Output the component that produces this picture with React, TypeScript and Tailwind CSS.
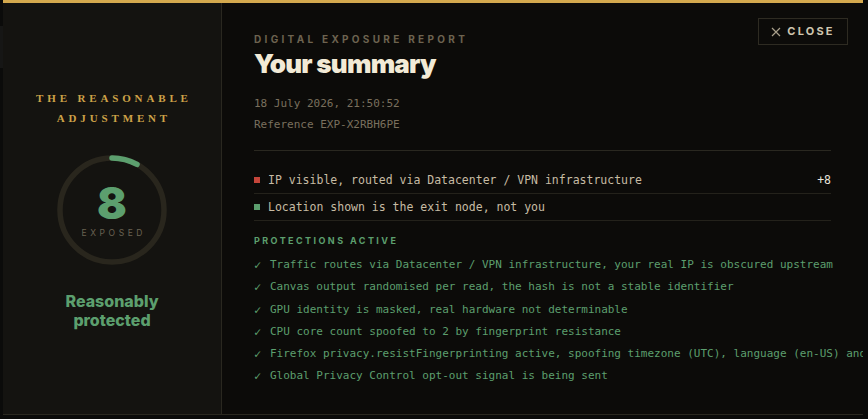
import React from "react";

const checks = [
  "Traffic routes via Datacenter / VPN infrastructure, your real IP is obscured upstream",
  "Canvas output randomised per read, the hash is not a stable identifier",
  "GPU identity is masked, real hardware not determinable",
  "CPU core count spoofed to 2 by fingerprint resistance",
  "Firefox privacy.resistFingerprinting active, spoofing timezone (UTC), language (en-US) and",
  "Global Privacy Control opt-out signal is being sent",
];

const mono = { fontFamily: '"DejaVu Sans Mono", "Liberation Mono", monospace' } as const;
const sans = { fontFamily: 'Inter, "Noto Sans", sans-serif' } as const;

export default function App() {
  return (
    <div className="relative w-[868px] h-[419px] overflow-hidden bg-[#0b0b0a]">
      <div className="absolute left-0 top-[26px] w-[3px] h-[42px] bg-[#161615]" />
      <div className="relative ml-[3px] flex w-[860px] h-[415px] overflow-hidden border-t-[3px] border-t-[#d4a94e] border-b border-b-[#2a2820] bg-[#0c0b09]">
        {/* Left panel */}
        <div className="flex w-[219px] shrink-0 flex-col items-center justify-center border-r border-r-[#2a2820] bg-[#141310]">
          <div
            className="text-center text-[11px] font-bold leading-[20px] tracking-[0.35em] text-[#cda248] pl-[0.35em]"
            style={{ fontFamily: '"Liberation Serif", serif' }}
          >
            <div>THE REASONABLE</div>
            <div>ADJUSTMENT</div>
          </div>
          <div className="relative mt-[27px] h-[110px] w-[110px]">
            <svg width="110" height="110" viewBox="0 0 110 110" className="absolute inset-0">
              <circle cx="55" cy="55" r="52" fill="none" stroke="#29261d" strokeWidth="5.5" />
              <circle
                cx="55"
                cy="55"
                r="52"
                fill="none"
                stroke="#5c9f6e"
                strokeWidth="5.5"
                strokeLinecap="round"
                pathLength={100}
                strokeDasharray="8 92"
                transform="rotate(-90 55 55)"
              />
            </svg>
            <div className="absolute inset-0 flex flex-col items-center justify-center">
              <div className="text-[44px] font-black leading-[44px] text-[#5c9f6e]" style={sans}>
                8
              </div>
              <div
                className="mt-[2px] pl-[0.42em] text-[8.5px] leading-[12px] tracking-[0.42em] text-[#6a6252]"
                style={sans}
              >
                EXPOSED
              </div>
            </div>
          </div>
          <div
            className="mt-[27px] text-center text-[16px] font-extrabold leading-[19px] text-[#5c9f6e]"
            style={sans}
          >
            <div>Reasonably</div>
            <div>protected</div>
          </div>
        </div>

        {/* Right panel */}
        <div className="min-w-0 flex-1 px-[32px] pt-[29px]">
          <div className="border-b border-b-[#2a2820] pb-[15px]">
            <div
              className="text-[10px] font-bold leading-[14px] tracking-[0.33em] text-[#6d6350]"
              style={sans}
            >
              DIGITAL EXPOSURE REPORT
            </div>
            <div
              className="mt-[3px] text-[26px] font-black leading-[30px] tracking-[-0.03em] text-[#f2ead6]"
              style={sans}
            >
              Your summary
            </div>
            <div className="mt-[14px] text-[11px] leading-[21px] text-[#7a705e]" style={mono}>
              <div>18 July 2026, 21:50:52</div>
              <div>Reference EXP-X2RBH6PE</div>
            </div>
          </div>

          <div className="mt-[16px]">
            <div className="flex h-[27px] items-center border-b border-b-[#24221b] text-[11.5px] text-[#c7bca4]" style={mono}>
              <span className="mr-[8px] h-[6px] w-[6px] bg-[#c4453a]" />
              <span className="flex-1 pt-[1px]">IP visible, routed via Datacenter / VPN infrastructure</span>
              <span className="pt-[1px] text-[#e8e4dc]">+8</span>
            </div>
            <div className="flex h-[27px] items-center border-b border-b-[#24221b] text-[11.5px] text-[#c7bca4]" style={mono}>
              <span className="mr-[8px] h-[6px] w-[6px] bg-[#5c9f6e]" />
              <span className="pt-[1px]">Location shown is the exit node, not you</span>
            </div>
          </div>

          <div
            className="mt-[13px] text-[9px] font-bold leading-[14px] tracking-[0.27em] text-[#5c9f6e]"
            style={sans}
          >
            PROTECTIONS ACTIVE
          </div>
          <div className="mt-[6px] text-[11px] leading-[22.3px] text-[#5c9f6e]" style={mono}>
            {checks.map((c) => (
              <div key={c} className="flex whitespace-nowrap">
                <span className="w-[16px] shrink-0 text-[12px]">✓</span>
                <span>{c}</span>
              </div>
            ))}
          </div>
        </div>

        {/* Close button */}
        <button
          className="absolute right-[15px] top-[15px] flex h-[27px] w-[90px] items-center justify-center gap-[6px] border border-[#2e2b22] bg-transparent"
          style={sans}
        >
          <svg width="10" height="10" viewBox="0 0 10 10" fill="none" stroke="#a89f8a" strokeWidth="1.2">
            <path d="M1 1 L9 9 M9 1 L1 9" />
          </svg>
          <span className="text-[11px] font-bold tracking-[0.2em] text-[#cfc6b0]">CLOSE</span>
        </button>
      </div>
    </div>
  );
}
